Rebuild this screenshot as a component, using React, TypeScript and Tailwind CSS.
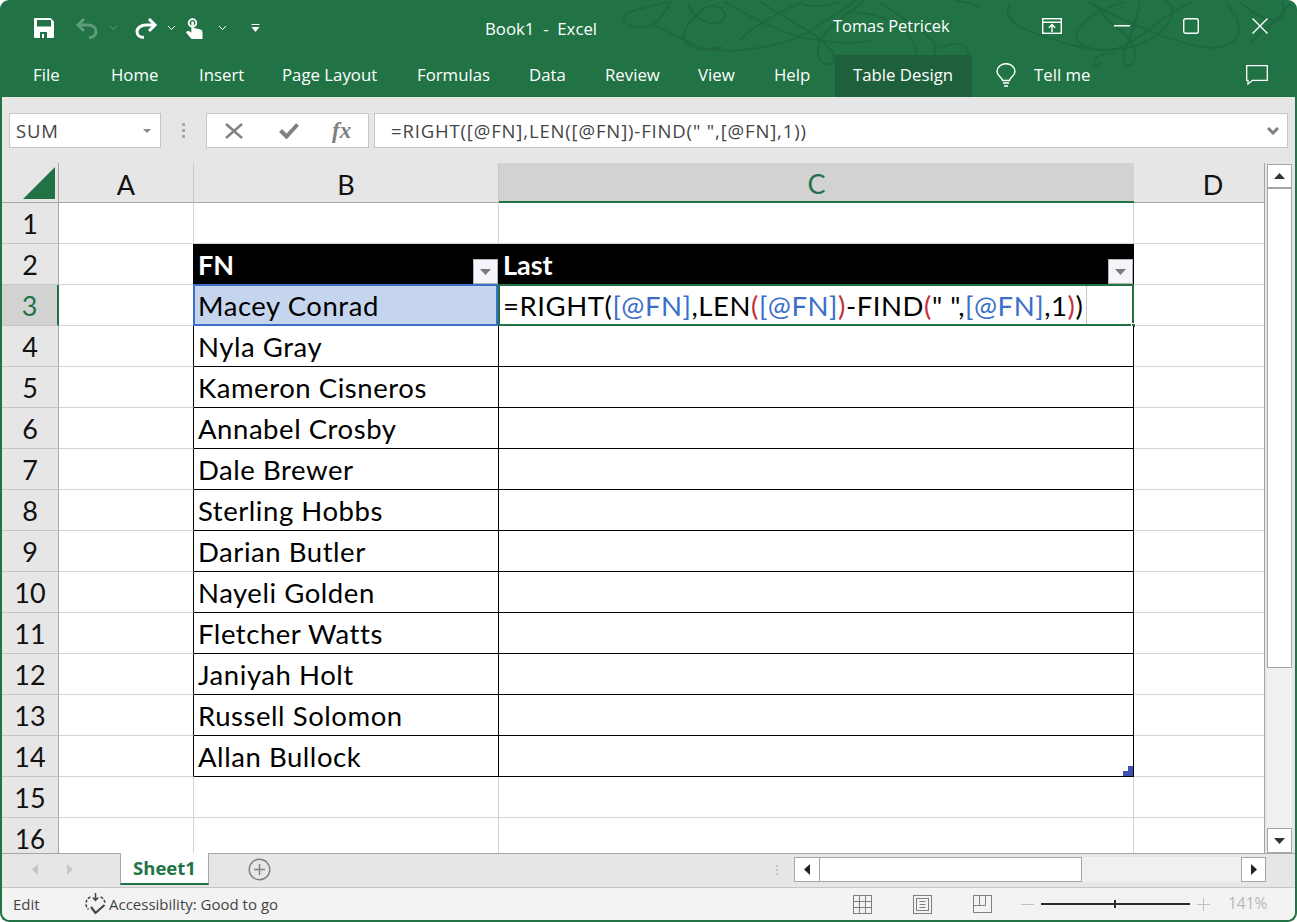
const UI = "font-['Open_Sans',sans-serif]";
const SHEET = "font-['Lato',sans-serif]";

const tabs = [
  { label: 'File', width: 'w-[78px]' },
  { label: 'Home', width: 'w-[88px]' },
  { label: 'Insert', width: 'w-[83px]' },
  { label: 'Page Layout', width: 'w-[135px]' },
  { label: 'Formulas', width: 'w-[112px]' },
  { label: 'Data', width: 'w-[76px]' },
  { label: 'Review', width: 'w-[93px]' },
  { label: 'View', width: 'w-[76px]' },
  { label: 'Help', width: 'w-[61px]' },
];

const names = [
  'Macey Conrad',
  'Nyla Gray',
  'Kameron Cisneros',
  'Annabel Crosby',
  'Dale Brewer',
  'Sterling Hobbs',
  'Darian Butler',
  'Nayeli Golden',
  'Fletcher Watts',
  'Janiyah Holt',
  'Russell Solomon',
  'Allan Bullock',
];

function Chevron({ dim }: { dim?: boolean }) {
  return (
    <svg width="9" height="6" viewBox="0 0 9 6" fill="none" stroke={dim ? '#5f9b7d' : '#fff'} strokeWidth="1">
      <path d="M1 1l3.500 3.500L8 1" />
    </svg>
  );
}

function Swirls() {
  return (
    <svg className="absolute left-0 top-0 pointer-events-none" width="1297" height="97" viewBox="0 0 1297 97" fill="none" stroke="#1d5f3b" strokeWidth="1.800" opacity="0.6">
      <path d="M668 2c-14 4-42 8-44 15-2 8 16 14 28 8 10-5 14-16 20-25" />
      <path d="M652 25c16 4 28 14 42 20 30 12 86 3 112-12 18-11 36-22 50-33" />
      <path d="M688 2c2 10 8 16 18 20 12 4 22-2 18-10-3-6-14-9-22-2-14 11-22 24-16 33 6 8 22 7 36 4" />
      <path d="M725 2c30 18 62 34 90 38 16 2 40 5 57 0" />
      <path d="M760 2c22 14 46 26 58 36 10 8 16 14 16 20 0 8-10 8-14 2-6-9 0-24 12-34 14-12 24-18 32-26" />
      <path d="M800 4c14 4 28 2 40-2" />
      <path d="M802 2c-22 10-50 24-62 38" />
      <path d="M880 2c16 12 34 22 50 36 8 6 8 20-4 28-12 6-24 0-24-12" />
      <path d="M848 12c16 0 34 4 48 12 12 7 26 26 18 36-6 6-22 8-28-2" />
      <path d="M955 0c8 2 18 2 24 8" />
      <path d="M942 48c10-6 22-6 26 2 2 6-6 10-12 8" />
      <path d="M1010 4c-6 8 0 18 12 24 24 10 58 22 84 22 30 0 52-12 62-26 8-12 4-22-6-24" />
      <path d="M1124 2c-26 8-42 18-47 30-4 8 6 16 22 18 34 4 52-30 92-48" />
      <path d="M1088 2c20 10 50 26 80 36 34 10 48 14 64 4 10-6 8-22-2-34l-4-6" />
      <path d="M1115 54c-10-2-20 2-21 8-1 6 4 4 6 0" />
      <path d="M1140 2c-4 24-12 38-16 52-2 8 2 14 8 10 6-6 2-22-8-30-12-10-24-20-30-32" />
      <path d="M1240 2c10 8 18 16 34 18 10 0 12-10 8-18" />
      <path d="M1250 42c16-12 30-26 40-38" />
    </svg>
  );
}

function TitleBar() {
  return (
    <div className={`relative flex h-[55px] items-center text-white ${UI}`}>
      <div className="relative flex w-[485px] items-center pl-[34px] pt-[1px]">
        <svg width="20" height="20" viewBox="0 0 20 20">
          <path fillRule="evenodd" fill="#fff" d="M1 0h15.500L20 3.500V19a1 1 0 0 1-1 1H1a1 1 0 0 1-1-1V1a1 1 0 0 1 1-1zM3 2v6.500h14V2zM6 14v6h2v-4h2v4h3v-6z" />
        </svg>
        <svg className="ml-[22px]" width="22" height="21" viewBox="0 0 22 21" fill="none" stroke="#5f9b7d" strokeWidth="3">
          <path d="M8 1L2 7l6 6" />
          <path d="M3 7h9c5 0 8 3 8 6.500s-3 6-7 6" />
        </svg>
        <span className="ml-[11px]"><Chevron dim /></span>
        <svg className="ml-[17px]" width="23" height="21" viewBox="0 0 23 21" fill="none" stroke="#fff" strokeWidth="3">
          <path d="M14 1l6 6-6 6" />
          <path d="M20 7h-9C6 7 2 10 2 13.500s3 6 7 6" />
        </svg>
        <span className="ml-[9px]"><Chevron /></span>
        <svg className="ml-[10px]" width="17" height="21" viewBox="0 0 17 21">
          <circle cx="6.500" cy="5" r="3.800" fill="none" stroke="#fff" strokeWidth="1.800" />
          <path fill="#fff" d="M5.300 4.500a1.300 1.300 0 0 1 2.600 0V10l6 1.200c1.600.4 2.600 1.400 2.600 3V21H5.500L0 14.500l1-1.200c.8-.6 2-.5 2.800.2l1.500 1.300z" />
        </svg>
        <span className="ml-[15px]"><Chevron /></span>
        <svg className="ml-[24px]" width="9" height="10" viewBox="0 0 9 10" fill="#fff">
          <rect x="0.500" y="1" width="8" height="1" />
          <path d="M0.500 4h8L4.500 9z" />
        </svg>
      </div>
      <Swirls />
      <span className="relative mt-[2px] w-[348px] text-[16.800px]">Book1&nbsp; -&nbsp; Excel</span>
      <span className="relative -mt-[3px] w-[209px] text-[16.400px]">Tomas Petricek</span>
      <svg className="relative -mt-[3px]" width="20" height="16" viewBox="0 0 20 16" fill="none" stroke="#fff" strokeWidth="1.400">
        <rect x="0.700" y="0.700" width="18.600" height="14.600" />
        <path d="M0.700 4.200h18.600M10 14V7M6.800 9.800L10 6.600l3.200 3.200" />
      </svg>
      <svg className="relative ml-[52px] -mt-[3px]" width="16" height="2" viewBox="0 0 16 2">
        <rect width="16" height="1.500" fill="#fff" />
      </svg>
      <svg className="relative ml-[53px] -mt-[3px]" width="16" height="16" viewBox="0 0 16 16" fill="none" stroke="#fff" strokeWidth="1.400">
        <rect x="0.700" y="0.700" width="14.600" height="14.600" rx="2" />
      </svg>
      <svg className="relative ml-[53px] -mt-[3px]" width="16" height="16" viewBox="0 0 16 16" fill="none" stroke="#fff" strokeWidth="1.400">
        <path d="M0.500 0.500l15 15M15.500 0.500l-15 15" />
      </svg>
    </div>
  );
}

function TabRow() {
  return (
    <div className={`relative flex h-[42px] items-center pl-[33px] text-[16.800px] text-white ${UI}`}>
      {tabs.map((tab) => (
        <span key={tab.label} className={`${tab.width} -mt-[3px]`}>
          {tab.label}
        </span>
      ))}
      <span className="flex h-full w-[137px] items-center bg-[#1e5f3c] pb-[3px] pl-[18px]">Table Design</span>
      <svg className="ml-[24px] -mt-[2px]" width="20" height="24" viewBox="0 0 20 24" fill="none" stroke="#fff" strokeWidth="1.500">
        <path d="M6.500 17.500c0-3-5.500-4.500-5.500-9a9 7.800 0 0 1 18 0c0 4.500-5.500 6-5.500 9z" />
        <path d="M7 20h6M8 23h4" />
      </svg>
      <span className="ml-[18px] -mt-[3px]">Tell me</span>
      <svg className="ml-[156px] -mt-[2px]" width="22" height="20" viewBox="0 0 22 20" fill="none" stroke="#fff" strokeWidth="1.300">
        <path d="M0.700 0.700h20.600v14.600H6.500L2 19v-3.700H0.700z" />
      </svg>
    </div>
  );
}

function FormulaBar() {
  return (
    <div className={`flex h-[66px] gap-[5px] pl-[7px] pr-[7px] pt-[16px] ${UI}`}>
      <div className="flex h-[35px] w-[152px] items-center justify-between border border-[#c6c6c6] bg-white pl-[6px] pr-[9px] text-[18.500px] tracking-[0.850px] text-[#444]">
        SUM
        <svg width="8" height="4" viewBox="0 0 8 4"><path d="M0 0h8L4 4z" fill="#8a8a8a" /></svg>
      </div>
      <div className="flex h-[35px] w-[35px] flex-col items-center justify-center gap-[3px]">
        <span className="h-[3px] w-[3px] bg-[#a8a8a8]" />
        <span className="h-[3px] w-[3px] bg-[#a8a8a8]" />
        <span className="h-[3px] w-[3px] bg-[#a8a8a8]" />
      </div>
      <div className="flex h-[35px] w-[163px] items-center border border-[#c6c6c6] bg-white pl-[18px]">
        <svg width="18" height="16" viewBox="0 0 18 16" fill="none" stroke="#808080" strokeWidth="2.400"><path d="M1 1l16 14M17 1L1 15" /></svg>
        <svg className="ml-[36px]" width="20" height="16" viewBox="0 0 20 16" fill="none" stroke="#808080" strokeWidth="4"><path d="M1.500 7.500L7.500 13.500L18.500 1.500" /></svg>
        <span className="ml-[33px] font-['Liberation_Serif',serif] text-[23px] font-bold italic leading-none text-[#808080]">fx</span>
      </div>
      <div className="flex h-[35px] flex-1 items-center justify-between border border-[#c6c6c6] bg-white pl-[16px] pr-[8px] text-[18.500px] tracking-[0.850px] text-[#444]">
        {'=RIGHT([@FN],LEN([@FN])-FIND(" ",[@FN],1))'}
        <svg width="12" height="8" viewBox="0 0 12 8" fill="none" stroke="#808080" strokeWidth="3"><path d="M1 1l5 5 5-5" /></svg>
      </div>
    </div>
  );
}

function FilterButton() {
  return (
    <span className="absolute bottom-[1px] right-[1px] flex h-[25px] w-[25px] items-center justify-center border border-[#b4b4b4] bg-[#f3f5fa]">
      <svg width="11" height="6" viewBox="0 0 11 6"><path d="M0 0h11L5.500 6z" fill="#7a7a7a" /></svg>
    </span>
  );
}

function Formula() {
  const ref = 'text-[#3a6fc9]';
  const paren = 'text-[#c4313c]';
  return (
    <span className="whitespace-nowrap">
      =RIGHT(<span className={ref}>[@FN]</span>,LEN<span className={paren}>(</span>
      <span className={ref}>[@FN]</span>
      <span className={paren}>)</span>-FIND<span className={paren}>(</span>" ",<span className={ref}>[@FN]</span>,1
      <span className={paren}>)</span>)
    </span>
  );
}

function Sheet() {
  const rowHead = 'flex items-center justify-center border-b border-r border-b-[#c6c6c6] border-r-[#a6a6a6] bg-[#e6e6e6] text-[27px] leading-none text-[#111]';
  const blank = 'border-b border-r border-[#d4d4d4] bg-white';
  const colHead = 'flex items-center justify-center border-b border-b-[#a6a6a6] bg-[#e6e6e6] pt-[3px] text-[27px] leading-none text-[#111]';
  const sep = 'border-r border-r-[#c6c6c6]';
  const text = 'flex items-center whitespace-nowrap pl-[4px] pt-[2px] text-[27.500px] tracking-[0.550px] leading-none text-black';
  const bold = 'flex items-center whitespace-nowrap pl-[4px] text-[27px] font-bold leading-none';

  return (
    <div className={`grid h-[690px] flex-1 grid-cols-[57px_135px_305px_635px_130px] grid-rows-[40px_repeat(15,41px)_35px] overflow-hidden border-r border-r-[#a6a6a6] ${SHEET}`}>
      {/* column headers */}
      <div className="relative border-b border-r border-b-[#a6a6a6] border-r-[#a6a6a6] bg-[#e6e6e6]">
        <svg className="absolute bottom-[3px] right-[3px]" width="32" height="32" viewBox="0 0 32 32"><path d="M32 0v32H0z" fill="#217346" /></svg>
      </div>
      <div className={`${colHead} ${sep}`}>A</div>
      <div className={`${colHead} ${sep}`}>B</div>
      <div className="flex items-center justify-center border-b-2 border-b-[#217346] bg-[#d2d2d2] pt-[3px] text-[27px] leading-none text-[#217346]">C</div>
      <div className={`${colHead} pl-[28px]`}>D</div>

      {/* row 1 */}
      <div className={rowHead}>1</div>
      <div className={blank} />
      <div className={blank} />
      <div className={blank} />
      <div className="border-b border-[#d4d4d4] bg-white" />

      {/* row 2, table header */}
      <div className={rowHead}>2</div>
      <div className="border-b border-r border-b-[#d4d4d4] border-r-black bg-white" />
      <div className={`${bold} relative bg-black text-white`}>
        FN
        <FilterButton />
      </div>
      <div className={`${bold} relative bg-black text-white`}>
        Last
        <FilterButton />
      </div>
      <div className="border-b border-[#d4d4d4] bg-white" />

      {names.map((name, i) => {
        const active = i === 0;
        return (
          <div key={name} className="contents">
            <div
              className={
                active
                  ? 'flex items-center justify-center border-b border-r-2 border-b-[#c6c6c6] border-r-[#217346] bg-[#d2d2d2] text-[27px] leading-none text-[#217346]'
                  : rowHead
              }
            >
              {i + 3}
            </div>
            <div className="border-b border-r border-b-[#d4d4d4] border-r-black bg-white" />
            <div className={`${text} relative border-b border-r border-b-black border-r-black ${active ? 'bg-[#c5d5ee] text-[#0d1b2e]' : 'bg-white'}`}>
              {name}
              {active && <span className="absolute -left-[1px] -top-[1px] -bottom-[1px] right-0 border-2 border-[#3a6fc5]" />}
            </div>
            <div className={`${text} relative border-b border-r border-b-black border-r-black bg-white`}>
              {active && (
                <>
                  <Formula />
                  <span className="absolute bottom-0 right-[46px] top-0 border-r border-[#c6c6c6]" />
                  <span className="absolute -left-[1px] -right-[1px] -top-[1px] -bottom-[1px] border-2 border-[#217346]" />
                  <span className="absolute -bottom-[3px] -right-[3px] h-[5px] w-[5px] border border-white bg-[#217346]" />
                </>
              )}
              {i === names.length - 1 && (
                <svg className="absolute bottom-0 right-0" width="10" height="10" viewBox="0 0 10 10"><path d="M5 0h5v10H0V5h5z" fill="#3f51b5" /></svg>
              )}
            </div>
            <div className="border-b border-[#d4d4d4] bg-white" />
          </div>
        );
      })}

      {/* row 15, and row 16 which the tab strip cuts short */}
      <div className={rowHead}>15</div>
      <div className={blank} />
      <div className={blank} />
      <div className={blank} />
      <div className="border-b border-[#d4d4d4] bg-white" />
      <div className="flex items-center justify-center border-r border-r-[#a6a6a6] bg-[#e6e6e6] pt-[7px] text-[26px] leading-none text-[#111]">16</div>
      <div className="border-r border-[#d4d4d4] bg-white" />
      <div className="border-r border-[#d4d4d4] bg-white" />
      <div className="border-r border-[#d4d4d4] bg-white" />
      <div className="bg-white" />
    </div>
  );
}

function VerticalScroll() {
  return (
    <div className="flex w-[30px] flex-col pl-[2px] pr-[3px] pt-[1px]">
      <div className="flex h-[25px] items-center justify-center border border-b-2 border-[#a6a6a6] bg-white">
        <svg width="11" height="6" viewBox="0 0 11 6"><path d="M5.500 0L11 6H0z" fill="#333" /></svg>
      </div>
      <div className="h-[479px] border-x border-b border-[#a6a6a6] bg-white" />
      <div className="flex-1 bg-[#f0f0f0]" />
      <div className="flex h-[25px] items-center justify-center border border-[#a6a6a6] bg-white">
        <svg width="11" height="6" viewBox="0 0 11 6"><path d="M0 0h11L5.500 6z" fill="#333" /></svg>
      </div>
    </div>
  );
}

function SheetTabs() {
  return (
    <div className={`flex h-[34px] items-start border-t border-[#a6a6a6] ${UI}`}>
      <div className="flex h-[31px] w-[118px] items-center pl-[30px]">
        <svg width="6" height="11" viewBox="0 0 6 11"><path d="M6 0v11L0 5.500z" fill="#c6c6c6" /></svg>
        <svg className="ml-[29px]" width="6" height="11" viewBox="0 0 6 11"><path d="M0 0v11l6-5.500z" fill="#c6c6c6" /></svg>
      </div>
      <div className="-mt-[1px] flex h-[32px] w-[89px] items-center justify-center border-x border-b-[2px] border-x-[#a6a6a6] border-b-[#217346] bg-white text-[18.500px] font-bold text-[#217346]">
        Sheet1
      </div>
      <svg className="ml-[39px] mt-[4px]" width="23" height="23" viewBox="0 0 23 23" fill="none" stroke="#808080" strokeWidth="1.400">
        <circle cx="11.500" cy="11.500" r="10.300" />
        <path d="M11.500 6v11M6 11.500h11" />
      </svg>
      <div className="ml-[505px] mt-[11px] flex flex-col gap-[2px]">
        <span className="h-[2px] w-[2px] bg-[#c6c6c6]" />
        <span className="h-[2px] w-[2px] bg-[#c6c6c6]" />
        <span className="h-[2px] w-[2px] bg-[#c6c6c6]" />
      </div>
      <div className="ml-[16px] mt-[3px] flex h-[25px] w-[472px] bg-[#f0f0f0]">
        <div className="flex w-[26px] items-center justify-center border border-[#a6a6a6] bg-white">
          <svg width="6" height="11" viewBox="0 0 6 11"><path d="M6 0v11L0 5.500z" fill="#222" /></svg>
        </div>
        <div className="w-[262px] border-y border-r border-[#a6a6a6] bg-white" />
        <div className="flex-1" />
        <div className="flex w-[25px] items-center justify-center border border-[#a6a6a6] bg-white">
          <svg width="6" height="11" viewBox="0 0 6 11"><path d="M0 0v11l6-5.500z" fill="#222" /></svg>
        </div>
      </div>
    </div>
  );
}

function StatusBar() {
  return (
    <div className={`flex h-[33px] items-center rounded-b-[8px] border-t border-[#c6c6c6] bg-[#f3f3f3] pl-[11px] text-[15px] text-[#444] ${UI}`}>
      <span className="w-[72px]">Edit</span>
      <svg width="21" height="22" viewBox="0 0 21 22" fill="none" stroke="#444" strokeWidth="1.500">
        <path d="M10.500 0v7M7.800 4.500l2.700 2.800 2.700-2.800" />
        <path d="M5.500 4C2.500 5 1 8 1 11c0 2 1 4 2.500 5.500M15.500 4c3 1 4.500 4 4.500 7" strokeDasharray="3 1.500" />
        <path d="M6 14l4.500 6 9-8" strokeWidth="2.200" />
      </svg>
      <span className="ml-[3px] w-[744px]">Accessibility: Good to go</span>
      <svg width="19" height="19" viewBox="0 0 19 19" fill="none" stroke="#808080" strokeWidth="1">
        <rect x="0.500" y="0.500" width="18" height="18" />
        <path d="M6.500 0.500v18M12.500 0.500v18M0.500 6.500h18M0.500 12.500h18" />
      </svg>
      <svg className="ml-[41px]" width="19" height="19" viewBox="0 0 19 19" fill="none" stroke="#808080" strokeWidth="1">
        <rect x="0.500" y="0.500" width="18" height="18" />
        <rect x="3.500" y="3.500" width="12" height="12" />
        <path d="M6.500 6.500h6M6.500 9.500h6M6.500 12.500h6" />
      </svg>
      <svg className="ml-[41px]" width="19" height="18" viewBox="0 0 19 18" fill="none" stroke="#808080" strokeWidth="1">
        <rect x="0.500" y="0.500" width="18" height="17" />
        <path d="M0.500 10.500h12V0.500M6.500 0.500v10" />
      </svg>
      <span className="ml-[29px] h-[1px] w-[13px] bg-[#c0c0c0]" />
      <div className="relative ml-[7px] h-[2px] w-[149px] bg-[#2b2b2b]">
        <span className="absolute left-[73px] top-[-3px] h-[8px] w-[2px] bg-[#2b2b2b]" />
      </div>
      <svg className="ml-[7px]" width="13" height="13" viewBox="0 0 13 13" stroke="#c0c0c0" strokeWidth="1"><path d="M6.500 0v13M0 6.500h13" /></svg>
      <span className="ml-[18px] text-[15.500px] text-[#b8b8b8]">141%</span>
    </div>
  );
}

export default function App() {
  return (
    <div className="h-[922px] w-[1297px] overflow-hidden rounded-[9px] bg-[#217346]">
      <TitleBar />
      <TabRow />
      <div className="mx-[2px] flex h-[823px] flex-col rounded-b-[8px] bg-[#e6e6e6]">
        <FormulaBar />
        <div className="flex h-[690px]">
          <Sheet />
          <VerticalScroll />
        </div>
        <SheetTabs />
        <StatusBar />
      </div>
    </div>
  );
}
